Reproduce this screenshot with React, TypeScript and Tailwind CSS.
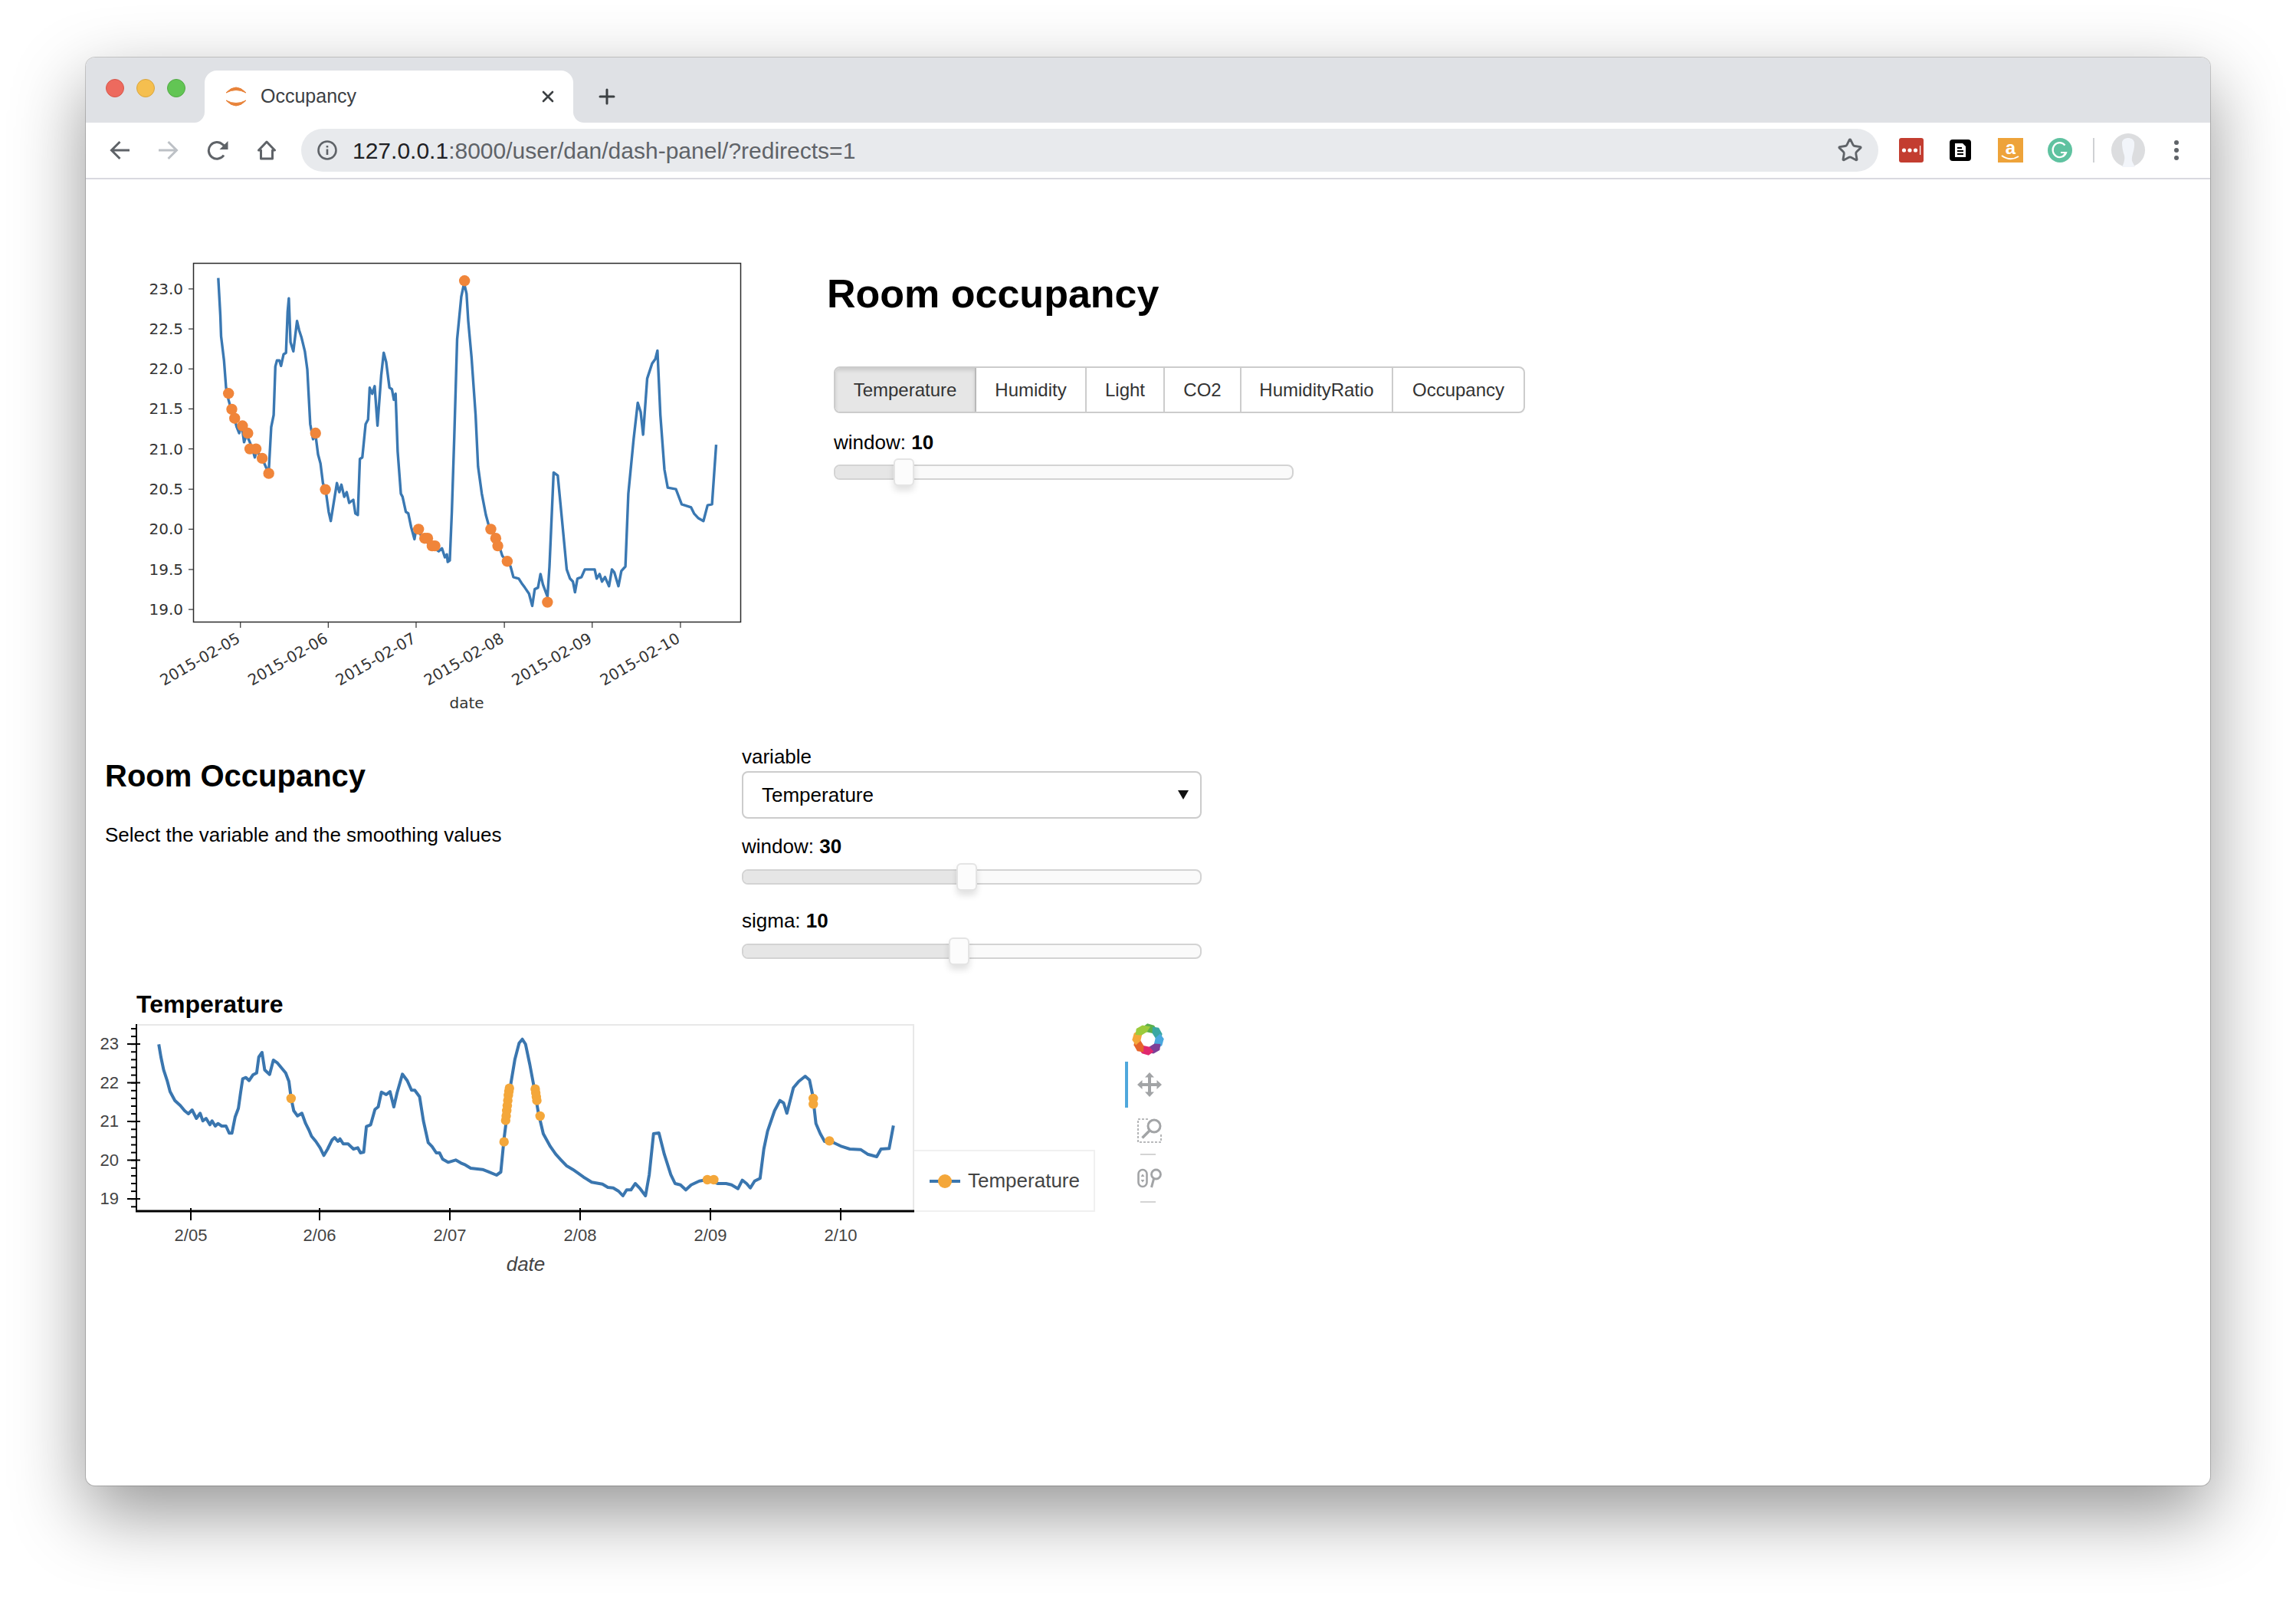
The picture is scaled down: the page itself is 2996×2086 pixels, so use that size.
import React from "react";
import { Star } from "lucide-react";

type Pt = [number, number];

// traced from the two plots, in crop coordinates, mapped to page pixels below
const mplRaw: Pt[] = [[233,108],[238,230],[240,300],[247,380],[252,470],[258,510],[264,540],[272,570],[278,600],[284,620],[290,590],[296,650],[302,625],[310,650],[318,680],[322,700],[328,670],[334,700],[342,710],[350,735],[356,745],[362,600],[368,560],[372,400],[376,380],[382,380],[386,398],[392,360],[398,355],[402,220],[405,175],[409,320],[416,350],[425,250],[430,280],[436,305],[444,350],[450,410],[457,590],[464,640],[470,625],[476,690],[482,720],[488,785],[495,810],[502,880],[507,910],[513,860],[522,785],[528,815],[533,790],[540,830],[546,815],[552,850],[562,840],[567,885],[573,890],[578,705],[584,700],[592,590],[598,575],[602,470],[608,490],[614,465],[621,595],[630,430],[636,355],[642,385],[650,470],[656,475],[661,510],[665,490],[670,680],[678,820],[682,830],[690,880],[696,885],[703,930],[711,970],[716,930],[728,960],[745,985],[770,1010],[778,1000],[785,1030],[790,1020],[792,1045],[797,1040],[802,880],[808,630],[815,310],[825,170],[832,125],[838,160],[842,250],[850,370],[860,560],[866,730],[875,820],[885,890],[895,940],[910,960],[925,1025],[935,1040],[945,1060],[952,1095],[965,1100],[972,1115],[980,1130],[990,1150],[998,1190],[1004,1135],[1012,1130],[1018,1085],[1024,1120],[1035,1160],[1040,1060],[1050,750],[1060,760],[1070,900],[1082,1070],[1090,1100],[1097,1110],[1102,1145],[1108,1100],[1118,1095],[1126,1070],[1150,1070],[1155,1100],[1162,1085],[1168,1110],[1175,1095],[1185,1125],[1192,1070],[1198,1080],[1208,1125],[1215,1075],[1225,1060],[1232,820],[1245,640],[1255,520],[1262,550],[1268,625],[1278,440],[1290,390],[1298,375],[1303,348],[1310,560],[1320,740],[1328,800],[1348,805],[1362,855],[1385,865],[1392,885],[1402,900],[1415,910],[1425,858],[1436,855],[1446,658]];
const mplDotsRaw: Pt[] = [[258,489],[266,541],[273,571],[292,596],[305,620],[310,672],[325,672],[340,703],[356,753],[470,620],[494,806],[721,937],[736,967],[743,967],[754,992],[761,992],[897,937],[909,967],[914,992],[937,1043],[1035,1178],[833,117]];

const bokehRaw: Pt[] = [[110,250],[114,300],[119,350],[126,395],[131,435],[140,470],[150,490],[158,510],[165,522],[172,507],[180,540],[187,520],[192,550],[198,540],[205,565],[209,550],[215,570],[220,560],[227,570],[235,570],[241,598],[246,598],[252,535],[258,500],[262,440],[266,385],[272,380],[278,392],[285,370],[292,362],[296,300],[302,282],[307,350],[316,368],[323,312],[330,322],[338,342],[346,362],[352,395],[356,460],[361,510],[368,530],[376,520],[383,560],[389,585],[394,610],[402,630],[410,655],[417,685],[424,660],[432,625],[437,615],[443,630],[447,620],[453,640],[462,640],[472,660],[480,655],[485,675],[491,672],[496,572],[504,565],[512,505],[518,495],[524,437],[533,447],[540,435],[547,495],[553,440],[563,367],[572,392],[580,430],[586,430],[595,455],[602,550],[611,635],[618,650],[626,675],[632,675],[638,700],[648,712],[662,703],[672,715],[680,722],[690,735],[712,740],[722,748],[738,762],[746,750],[752,620],[758,520],[765,400],[772,310],[780,245],[786,230],[792,250],[800,330],[808,420],[816,520],[825,600],[838,650],[848,680],[858,703],[868,725],[880,740],[890,755],[900,770],[915,790],[935,797],[945,810],[955,812],[965,825],[973,843],[980,820],[988,820],[996,795],[1005,815],[1015,843],[1022,760],[1030,600],[1040,597],[1050,680],[1062,760],[1070,795],[1080,800],[1090,820],[1100,800],[1115,785],[1130,780],[1150,795],[1165,795],[1175,800],[1187,815],[1195,782],[1203,795],[1210,812],[1218,785],[1228,775],[1235,660],[1242,590],[1255,510],[1265,470],[1272,480],[1278,520],[1290,420],[1300,395],[1312,375],[1320,390],[1326,450],[1332,560],[1340,600],[1348,630],[1365,635],[1380,650],[1395,660],[1415,662],[1428,680],[1445,690],[1453,660],[1468,658],[1476,568]];
const bokehDotsRaw: Pt[] = [[356,462],[752,632],[755,548],[756,530],[757,510],[758,490],[759,470],[760,450],[761,435],[762,422],[810,425],[811,440],[812,455],[813,470],[819,531],[1130,780],[1142,780],[1327,462],[1327,484],[1357,628]];

const mplX = (x: number) => 160 + x / 1.867;
const mplY = (y: number) => 320 + y / 2.53;
const bkX = (x: number) => 130 + x / 1.425;
const bkY = (y: number) => 1280 + y / 3;

const linePath = (pts: Pt[], fx: (n: number) => number, fy: (n: number) => number) =>
  pts.map(([x, y], i) => `${i ? "L" : "M"}${fx(x).toFixed(1)} ${fy(y).toFixed(1)}`).join(" ");

const MPL_Y_TICKS: [number, string][] = [[144,"23.0"],[276,"22.5"],[408,"22.0"],[540,"21.5"],[672,"21.0"],[805,"20.5"],[937,"20.0"],[1070,"19.5"],[1202,"19.0"]];
const MPL_X_TICKS: [number, string][] = [[287,"2015-02-05"],[501,"2015-02-06"],[715,"2015-02-07"],[930,"2015-02-08"],[1144,"2015-02-09"],[1359,"2015-02-10"]];

function MatplotlibChart() {
  return (
    <svg viewBox="160 320 840 620" className="w-[840px] h-[620px] shrink-0 [font-family:'DejaVu_Sans',sans-serif]">
      <rect x="252.5" y="343.5" width="714" height="468" fill="none" stroke="#2b2b2b" strokeWidth="1.5" />
      {MPL_Y_TICKS.map(([y, label]) => (
        <g key={label}>
          <line x1="246" x2="252" y1={mplY(y)} y2={mplY(y)} stroke="#333" strokeWidth="1.2" />
          <text x="239" y={mplY(y) + 7} textAnchor="end" fontSize="20" fill="#333">{label}</text>
        </g>
      ))}
      {MPL_X_TICKS.map(([x, label]) => (
        <g key={label}>
          <line x1={mplX(x)} x2={mplX(x)} y1="812" y2="819" stroke="#333" strokeWidth="1.2" />
          <text
            x={mplX(x) + 1}
            y="837"
            textAnchor="end"
            fontSize="20"
            fill="#333"
            transform={`rotate(-30 ${mplX(x) + 1} 837)`}
          >
            {label}
          </text>
        </g>
      ))}
      <text x="609" y="924" textAnchor="middle" fontSize="20" fill="#333">date</text>
      <path d={linePath(mplRaw, mplX, mplY)} fill="none" stroke="#3a78b2" strokeWidth="3.4" strokeLinejoin="round" />
      {mplDotsRaw.map(([x, y], i) => (
        <circle key={i} cx={mplX(x)} cy={mplY(y)} r="7.2" fill="#f0853a" />
      ))}
    </svg>
  );
}

const BK_Y_TICKS: [number, string][] = [[1363,"23"],[1413.5,"22"],[1464,"21"],[1514.5,"20"],[1565,"19"]];
const BK_X_TICKS: [number, string][] = [[249,"2/05"],[417,"2/06"],[587,"2/07"],[757,"2/08"],[927,"2/09"],[1097,"2/10"]];
const BK_MINOR = Array.from({ length: 24 }, (_, i) => 1343 + i * 10.1);

function BokehChart() {
  return (
    <svg viewBox="130 1337 1063 333" className="w-[1063px] h-[333px] shrink-0">
      <path d="M178 1338 H1192 V1581" fill="none" stroke="#e8e8e8" strokeWidth="2" />
      {BK_MINOR.map((y) => (
        <line key={y} x1="171" x2="178" y1={y} y2={y} stroke="#000" strokeWidth="2" />
      ))}
      {BK_Y_TICKS.map(([y, label]) => (
        <g key={label}>
          <line x1="166" x2="183" y1={y} y2={y} stroke="#000" strokeWidth="2" />
          <text x="155" y={y + 7} textAnchor="end" fontSize="22" fill="#444">{label}</text>
        </g>
      ))}
      {BK_X_TICKS.map(([x, label]) => (
        <g key={label}>
          <line x1={x} x2={x} y1="1577" y2="1593" stroke="#000" strokeWidth="2" />
          <text x={x} y="1620" textAnchor="middle" fontSize="22" fill="#444">{label}</text>
        </g>
      ))}
      <line x1="178" x2="178" y1="1337" y2="1582" stroke="#000" strokeWidth="2" />
      <line x1="177" x2="1193" y1="1581" y2="1581" stroke="#000" strokeWidth="3" />
      <text x="686" y="1659" textAnchor="middle" fontSize="26" fontStyle="italic" fill="#444">date</text>
      <path d={linePath(bokehRaw, bkX, bkY)} fill="none" stroke="#3a76af" strokeWidth="4" strokeLinejoin="round" />
      {bokehDotsRaw.map(([x, y], i) => (
        <circle key={i} cx={bkX(x)} cy={bkY(y)} r="6.2" fill="#f4a73a" />
      ))}
    </svg>
  );
}

function Slider({ handle }: { handle: number }) {
  return (
    <div className="relative h-[20px] w-[600px] mt-[15px] ml-[-1px] rounded-[8px] border-2 border-[#d3d3d3] bg-[#fafafa]">
      <div className="h-full rounded-l-[6px] bg-[#e6e6e6]" style={{ width: handle }} />
      <div
        className="absolute top-[-10px] w-[27px] h-[36px] rounded-[6px] border-2 border-[#e4e4e4] bg-[#fcfcfc] shadow-[0_6px_8px_rgba(0,0,0,0.12)]"
        style={{ left: handle - 2 }}
      />
    </div>
  );
}

function WidgetLabel({ name, value }: { name: string; value?: string }) {
  return (
    <div className="text-[26px] leading-[30px] text-black">
      {name}
      {value && <b className="font-bold"> {value}</b>}
    </div>
  );
}

const BUTTONS = [
  { label: "Temperature", width: 184 },
  { label: "Humidity", width: 144 },
  { label: "Light", width: 102 },
  { label: "CO2", width: 100 },
  { label: "HumidityRatio", width: 198 },
  { label: "Occupancy", width: 174 },
];

function ButtonGroup() {
  return (
    <div className="flex w-[902px] h-[61px] mt-[65px] ml-[-1px] rounded-[8px] border-2 border-[#ccc] overflow-hidden">
      {BUTTONS.map((b, i) => (
        <div
          key={b.label}
          className={
            i === 0
              ? "flex items-center justify-center shrink-0 text-[24px] text-[#333] bg-[#e6e6e6] border-r-2 border-[#b9b9b9] shadow-[inset_0_3px_5px_rgba(0,0,0,0.125)]"
              : i === BUTTONS.length - 1
                ? "flex items-center justify-center flex-1 text-[24px] text-[#333]"
                : "flex items-center justify-center shrink-0 text-[24px] text-[#333] border-r-2 border-[#ccc]"
          }
          style={i === BUTTONS.length - 1 ? undefined : { width: b.width }}
        >
          {b.label}
        </div>
      ))}
    </div>
  );
}

function BokehLogo() {
  const colors = ["#5cb04a", "#3aa7a3", "#4aa8de", "#7c3f98", "#e0286e", "#e5642b", "#f5a83a", "#9ccb3c"];
  return (
    <svg viewBox="-21 -21 42 42" className="w-[42px] h-[42px]">
      {colors.map((c, i) => (
        <polygon key={c} points="-3,-20.5 6,-19 13,-11 5,-8.5 -3,-9.5 -9,-15" fill={c} transform={`rotate(${i * 45 + 6})`} />
      ))}
    </svg>
  );
}

function Toolbar() {
  return (
    <div className="flex flex-col w-[60px] ml-[39px] shrink-0">
      <div className="flex items-start justify-center h-[49px] mt-[-1px] mb-[1px]"><BokehLogo /></div>
      <div className="flex items-center justify-center h-[60px] border-l-4 border-[#4fa8dc]">
        <svg viewBox="0 0 32 32" className="w-[32px] h-[32px] ml-[-1px]" fill="#a2a4a6">
          <path d="M16 0 L22 6.5 H18 V14 H25.5 V10 L32 16 L25.5 22 V18 H18 V25.5 H22 L16 32 L10 25.5 H14 V18 H6.5 V22 L0 16 L6.5 10 V14 H14 V6.5 H10 Z" />
        </svg>
      </div>
      <div className="flex items-center justify-center h-[60px]">
        <svg viewBox="0 0 32 32" className="w-[32px] h-[32px] ml-[3px]" fill="none" stroke="#a2a4a6">
          <rect x="1" y="1" width="30" height="30" strokeWidth="1.6" strokeDasharray="3 2" />
          <rect x="16" y="-1" width="18" height="22" fill="#fff" stroke="none" />
          <circle cx="22" cy="10" r="8" strokeWidth="3" />
          <line x1="16" y1="16" x2="6.5" y2="25.5" strokeWidth="3.6" />
        </svg>
      </div>
      <div className="h-[2px] w-[20px] ml-[20px] bg-[#d4d4d4]" />
      <div className="flex items-start justify-center h-[60px] pt-[17px]">
        <svg viewBox="0 0 32 26" className="w-[32px] h-[26px] ml-[3px]" fill="none" stroke="#a2a4a6">
          <rect x="1.5" y="2" width="11" height="22" rx="5.5" strokeWidth="2.6" />
          <path d="M7 7.5 L9.5 11 H4.5 Z M7 18.5 L9.5 15 H4.5 Z" fill="#a2a4a6" stroke="none" />
          <circle cx="24.5" cy="8" r="6" strokeWidth="2.8" />
          <line x1="21.5" y1="14" x2="18.5" y2="25" strokeWidth="3" />
        </svg>
      </div>
      <div className="h-[2px] w-[20px] ml-[20px] bg-[#d4d4d4]" />
    </div>
  );
}

function Legend() {
  return (
    <div className="flex items-center w-[236px] h-[81px] mt-[164px] shrink-0 border-2 border-l-0 border-[#f0f0f0] pl-[20px]">
      <svg viewBox="0 0 40 20" className="w-[40px] h-[20px] shrink-0">
        <line x1="0" x2="40" y1="10" y2="10" stroke="#3a76af" strokeWidth="4" />
        <circle cx="20" cy="10" r="9" fill="#f4a73a" />
      </svg>
      <span className="ml-[10px] mb-[1px] text-[26px] text-[#444]">Temperature</span>
    </div>
  );
}

function TabStrip() {
  return (
    <div className="flex items-end h-[85px] bg-[#dfe1e5] rounded-t-[12px]">
      <div className="flex items-center gap-[16px] w-[155px] h-[68px] pb-[22px] pl-[26px] shrink-0">
        <span className="w-[24px] h-[24px] rounded-full bg-[#ed6a5e] border border-[#d6564a]" />
        <span className="w-[24px] h-[24px] rounded-full bg-[#f5bf4f] border border-[#d9a53e]" />
        <span className="w-[24px] h-[24px] rounded-full bg-[#62c554] border border-[#52a945]" />
      </div>
      <div className="relative flex items-center w-[481px] h-[68px] pl-[26px] pr-[25px] bg-white rounded-t-[16px] shrink-0">
        <div className="absolute left-[-14px] bottom-0 w-[14px] h-[14px] bg-white">
          <div className="w-full h-full bg-[#dfe1e5] rounded-br-[14px]" />
        </div>
        <div className="absolute right-[-14px] bottom-0 w-[14px] h-[14px] bg-white">
          <div className="w-full h-full bg-[#dfe1e5] rounded-bl-[14px]" />
        </div>
        <svg viewBox="0 0 30 30" className="w-[30px] h-[30px] shrink-0 mb-[1px]">
          <path d="M2 10 Q15 -4 28 10 Q15 3 2 10 Z" fill="#e8833a" stroke="#e8833a" strokeWidth="1" />
          <path d="M2 20 Q15 34 28 20 Q15 27 2 20 Z" fill="#e8833a" stroke="#e8833a" strokeWidth="1" />
        </svg>
        <span className="ml-[17px] text-[25px] text-[#3c4043]">Occupancy</span>
        <svg viewBox="0 0 16 16" className="w-[16px] h-[16px] ml-auto" stroke="#3c4043" strokeWidth="2.6" strokeLinecap="round">
          <path d="M2 2 L14 14 M14 2 L2 14" />
        </svg>
      </div>
      <svg viewBox="0 0 22 22" className="w-[22px] h-[22px] ml-[33px] mb-[23px]" stroke="#3c4043" strokeWidth="3" strokeLinecap="round">
        <path d="M11 2 V20 M2 11 H20" />
      </svg>
    </div>
  );
}

function AddressBar() {
  return (
    <div className="flex items-center w-[2058px] h-[56px] ml-[32px] pl-[21px] pr-[20px] rounded-full bg-[#e8eaed] shrink-0">
      <svg viewBox="0 0 26 26" className="w-[26px] h-[26px] shrink-0" fill="none" stroke="#5f6368" strokeWidth="2.6">
        <circle cx="13" cy="13" r="11.5" />
        <path d="M13 11.5 V19 M13 7 V9.4" />
      </svg>
      <span className="ml-[20px] text-[30px] text-[#202124] whitespace-nowrap">
        127.0.0.1<span className="text-[#5f6368]">:8000/user/dan/dash-panel/?redirects=1</span>
      </span>
      <Star className="ml-auto w-[34px] h-[34px] text-[#5f6368]" strokeWidth={2} />
    </div>
  );
}

function NavIcons() {
  return (
    <div className="flex items-center gap-[38px] pl-[31px] shrink-0">
      <svg viewBox="0 0 26 26" className="w-[26px] h-[26px]" fill="none" stroke="#5f6368" strokeWidth="3">
        <path d="M26 13 H3 M13.5 2 L2.5 13 L13.5 24" />
      </svg>
      <svg viewBox="0 0 26 26" className="w-[26px] h-[26px]" fill="none" stroke="#bdc1c6" strokeWidth="3">
        <path d="M0 13 H23 M12.5 2 L23.5 13 L12.5 24" />
      </svg>
      <svg viewBox="0 0 28 26" className="w-[28px] h-[26px] ml-[-1px]" fill="none" stroke="#5f6368" strokeWidth="3">
        <path d="M22 19.5 A 10.8 10.8 0 1 1 20.5 5.5 L26 10" />
        <path d="M27.5 1 V12 H16.5 Z" fill="#5f6368" stroke="none" />
      </svg>
      <svg viewBox="0 0 26 26" className="w-[26px] h-[26px] ml-[-1px]" fill="none" stroke="#5f6368" strokeWidth="3">
        <path d="M13 2 L23.5 13 H20.5 V24 H5.5 V13 H2.5 Z" strokeLinejoin="round" />
      </svg>
    </div>
  );
}

function ExtensionIcons() {
  return (
    <div className="flex items-center ml-[27px] shrink-0">
      <svg viewBox="0 0 32 32" className="w-[32px] h-[32px]">
        <rect width="32" height="32" rx="3" fill="#c33d30" />
        <circle cx="6.5" cy="16" r="2.6" fill="#fff" />
        <circle cx="14" cy="16" r="2.6" fill="#fff" />
        <circle cx="21.5" cy="16" r="2.6" fill="#fff" />
        <rect x="27" y="10" width="1.2" height="12" fill="#fff" />
      </svg>
      <svg viewBox="0 0 28 28" className="w-[28px] h-[28px] ml-[34px]">
        <rect width="28" height="28" rx="4" fill="#000" />
        <path d="M7 5 H17 L21 9 V23 H7 Z" fill="#fff" />
        <path d="M10 11 H16 M10 15 H18 M10 19 H18" stroke="#000" strokeWidth="1.8" />
      </svg>
      <svg viewBox="0 0 33 32" className="w-[33px] h-[32px] ml-[35px]">
        <rect width="33" height="32" fill="#eea33a" />
        <text x="16.5" y="21" textAnchor="middle" fontSize="24" fontWeight="700" fill="#fff">a</text>
        <path d="M5 23 Q16 31 27 24" fill="none" stroke="#fff" strokeWidth="2" />
      </svg>
      <svg viewBox="0 0 32 32" className="w-[32px] h-[32px] ml-[32px]">
        <circle cx="16" cy="16" r="16" fill="#5fc2a0" />
        <path d="M22.5 9.5 A 9 9.5 0 1 0 24 19 H17" fill="none" stroke="#fff" strokeWidth="2.2" />
        <path d="M24 19 L20 24" stroke="#fff" strokeWidth="2.2" />
      </svg>
      <div className="w-[2px] h-[32px] ml-[27px] bg-[#cfd1d4]" />
      <svg viewBox="0 0 44 44" className="w-[44px] h-[44px] ml-[22px]">
        <circle cx="22" cy="22" r="22" fill="#dcdddf" />
        <path d="M14 12 C15 4 29 4 30 12 C31 22 26 28 27 36 L31 44 H14 C18 36 18 30 16 26 C15 22 14 18 14 12 Z" fill="#f2f5fa" />
      </svg>
      <div className="flex flex-col gap-[4px] ml-[38px]">
        <span className="w-[6px] h-[6px] rounded-full bg-[#5f6368]" />
        <span className="w-[6px] h-[6px] rounded-full bg-[#5f6368]" />
        <span className="w-[6px] h-[6px] rounded-full bg-[#5f6368]" />
      </div>
    </div>
  );
}

export default function App() {
  return (
    <div className="w-[2996px] h-[2086px] pt-[75px] pl-[112px] bg-white overflow-hidden [font-family:'Liberation_Sans',Arial,sans-serif]">
      <div className="w-[2772px] h-[1863px] rounded-[12px] bg-white shadow-[0_0_0_1px_rgba(0,0,0,0.18),0_36px_95px_rgba(0,0,0,0.42)]">
        <TabStrip />
        <div className="flex items-center h-[72px] bg-white">
          <NavIcons />
          <AddressBar />
          <ExtensionIcons />
        </div>
        <div className="h-[2px] bg-[#d9d9e0]" />

        <div className="pl-[18px]">
          {/* first pane: matplotlib image + widgets */}
          <div className="flex ml-[30px] mt-[86px]">
            <MatplotlibChart />
            <div className="ml-[79px]">
              <h1 className="mt-[33px] text-[52px] leading-[60px] font-bold text-black">Room occupancy</h1>
              <div className="ml-[10px]">
                <ButtonGroup />
                <div className="mt-[23px] ml-[-1px]"><WidgetLabel name="window:" value="10" /></div>
                <div className="mt-[-1px]"><Slider handle={78} /></div>
              </div>
            </div>
          </div>

          {/* second pane */}
          <div className="flex ml-[7px] mt-[32px]">
            <div className="w-[832px] shrink-0">
              <h2 className="mt-[17px] text-[40px] leading-[46px] font-bold text-black">Room Occupancy</h2>
              <p className="mt-[39px] text-[26px] leading-[30px] text-black">Select the variable and the smoothing values</p>
            </div>
            <div className="w-[599px] shrink-0">
              <div className="ml-[-1px]"><WidgetLabel name="variable" /></div>
              <div className="flex items-center justify-between w-[600px] h-[62px] mt-[4px] ml-[-1px] pl-[24px] pr-[15px] rounded-[8px] border-2 border-[#ccc] text-[26px] text-black">
                <span>Temperature</span>
                <svg viewBox="0 0 14 12" className="w-[14px] h-[12px]"><path d="M0 0 H14 L7 12 Z" fill="#111" /></svg>
              </div>
              <div className="mt-[21px] ml-[-1px]"><WidgetLabel name="window:" value="30" /></div>
              <Slider handle={280} />
              <div className="mt-[32px] ml-[-1px]"><WidgetLabel name="sigma:" value="10" /></div>
              <Slider handle={270} />
            </div>
          </div>

          {/* bokeh plot */}
          <div className="ml-[48px] mt-[41px] text-[32px] leading-[36px] font-bold text-black">Temperature</div>
          <div className="flex mt-[8px]">
            <BokehChart />
            <Legend />
            <Toolbar />
          </div>
        </div>
      </div>
    </div>
  );
}
